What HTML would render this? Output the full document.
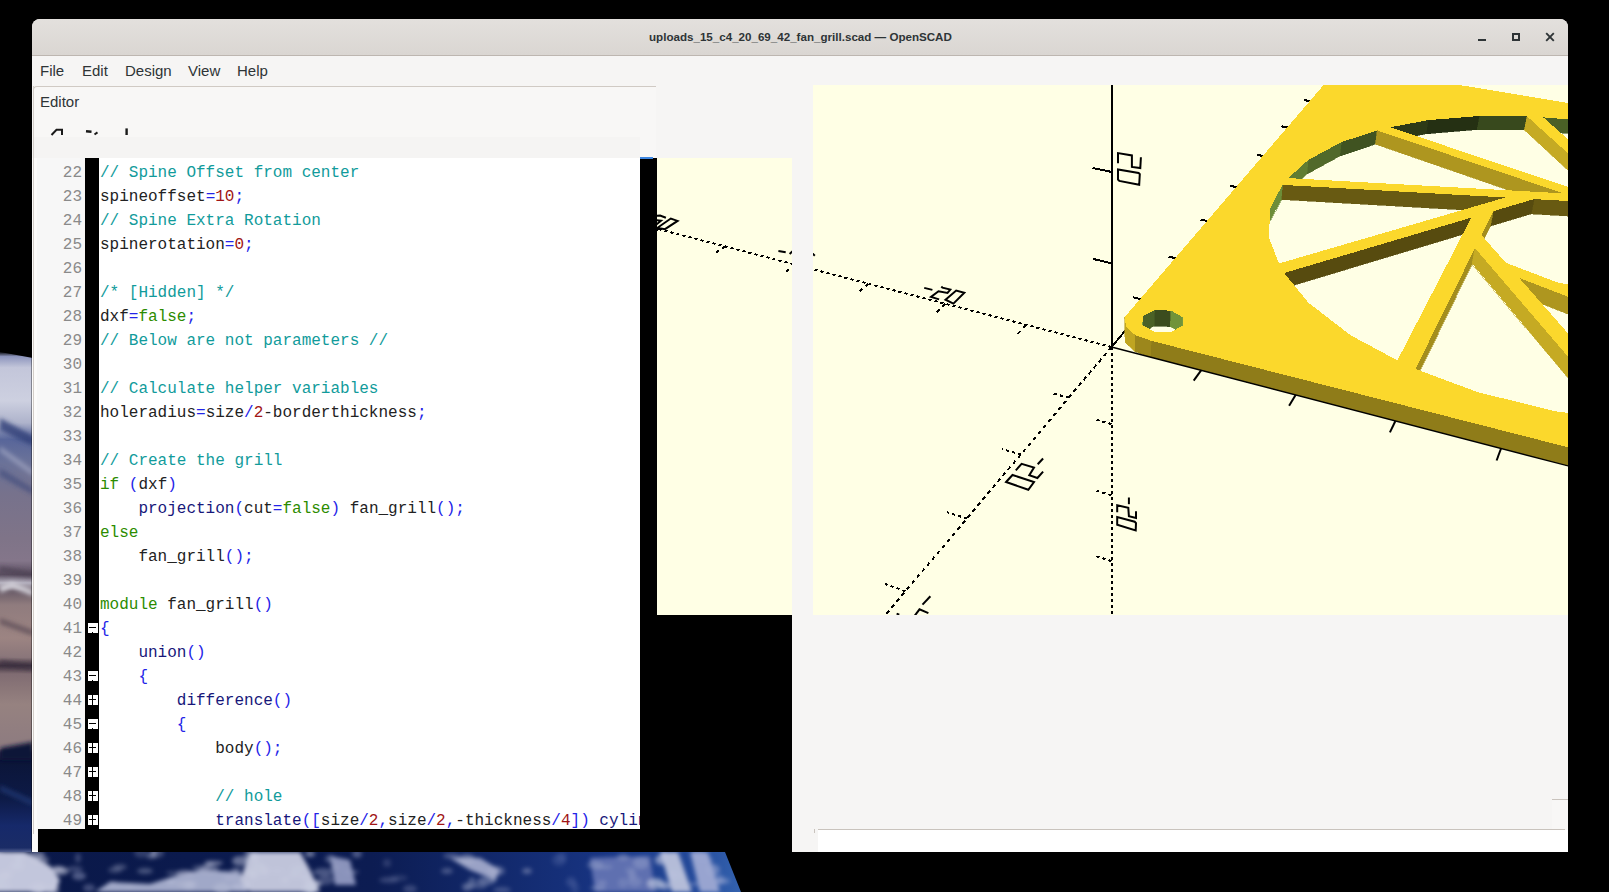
<!DOCTYPE html>
<html><head><meta charset="utf-8">
<style>
*{margin:0;padding:0;box-sizing:border-box}
html,body{width:1609px;height:892px;overflow:hidden;background:#000;position:relative;font-family:"Liberation Sans",sans-serif}
.a{position:absolute}
#win{position:absolute;left:32px;top:19px;width:1536px;height:833px;background:#f6f5f4;border-radius:8px 8px 0 0;overflow:hidden}
#title{position:absolute;left:32px;top:19px;width:1536px;height:37px;background:linear-gradient(#e3e0dd,#dad6d2);border-bottom:1px solid #bdb6b0;border-radius:8px 8px 0 0}
#title .t{position:absolute;left:617px;top:11px;font-weight:bold;font-size:11.6px;color:#2e3436;white-space:nowrap}
#menu{position:absolute;left:32px;top:56px;width:1536px;height:30px;background:#f6f5f4}
.mi{position:absolute;top:63px;font-size:15px;color:#2e3436;line-height:16px}
#dock{position:absolute;left:33px;top:86px;width:623px;height:72px;background:#f8f7f6;border-top:1px solid #d0cac4;border-left:1px solid #d0cac4;border-radius:4px 0 0 0}
#gut{position:absolute;left:37px;top:158px;width:47px;height:671px;background:#f7f7f7}
#blue{position:absolute;left:36px;top:157px;width:1px;height:673px;background:#9cbff0}
#margin{position:absolute;left:85px;top:158px;width:14px;height:671px;background:#000}
#code{position:absolute;left:99px;top:158px;width:541px;height:671px;background:#fff;overflow:hidden}
pre{font-family:"Liberation Mono",monospace;font-size:16px;line-height:24px;color:#222;position:absolute;white-space:pre}
#nums{left:0;top:3px;width:45px;text-align:right;color:#8a8a8a}
#txt{left:1px;top:3px}
.c{color:#119b9b}.o{color:#2424e8}.n{color:#a01515}.k{color:#2c8c00}.m{color:#17177a}
.fb{position:absolute;left:88px;width:10px;height:10px;background:#fff}
.fb i{position:absolute;background:#000}
.fb .h{left:1px;top:4px;width:7px;height:1px}
.fb .v{left:4px;top:0;width:1px;height:10px}
.fb .nt{left:4px;top:9px;width:1px;height:1px}
</style></head><body>
<svg class="a" style="left:0;top:340px" width="33" height="552" viewBox="0 340 33 552">
<defs>
<linearGradient id="eg" x1="0" y1="340" x2="0" y2="892" gradientUnits="userSpaceOnUse">
<stop offset="0" stop-color="#000"/>
<stop offset="0.021" stop-color="#000"/>
<stop offset="0.03" stop-color="#8d95bd"/>
<stop offset="0.05" stop-color="#c3c6da"/>
<stop offset="0.11" stop-color="#cdd0e0"/>
<stop offset="0.15" stop-color="#aeb3cb"/>
<stop offset="0.18" stop-color="#58669a"/>
<stop offset="0.22" stop-color="#6a7299"/>
<stop offset="0.28" stop-color="#77728c"/>
<stop offset="0.36" stop-color="#7f7488"/>
<stop offset="0.40" stop-color="#84768a"/>
<stop offset="0.425" stop-color="#5a4e60"/>
<stop offset="0.44" stop-color="#b5b1bf"/>
<stop offset="0.455" stop-color="#6a5c68"/>
<stop offset="0.48" stop-color="#907c7e"/>
<stop offset="0.54" stop-color="#9c8482"/>
<stop offset="0.575" stop-color="#8a767a"/>
<stop offset="0.59" stop-color="#3e3240"/>
<stop offset="0.605" stop-color="#806c72"/>
<stop offset="0.66" stop-color="#968280"/>
<stop offset="0.74" stop-color="#8d7b80"/>
<stop offset="0.748" stop-color="#2a2a48"/>
<stop offset="0.76" stop-color="#0b1538"/>
<stop offset="0.83" stop-color="#0d1a46"/>
<stop offset="0.88" stop-color="#16296a"/>
<stop offset="0.92" stop-color="#1a2c66"/>
<stop offset="0.935" stop-color="#8e96bc"/>
<stop offset="0.96" stop-color="#c6cadf"/>
<stop offset="1" stop-color="#b0b5d0"/>
</linearGradient>
<filter id="eb" filterUnits="userSpaceOnUse" x="-20" y="330" width="80" height="580"><feGaussianBlur stdDeviation="2"/></filter>
</defs>
<rect x="0" y="340" width="33" height="552" fill="url(#eg)"/>
<g filter="url(#eb)">
<polygon points="0,418 33,436 33,446 0,430" fill="#304078" opacity="0.8"/>
<polygon points="0,446 33,470 33,476 0,452" fill="#a9aec8" opacity="0.6"/>
<polygon points="0,468 33,488 33,495 0,476" fill="#3e4a7c" opacity="0.6"/>
<polygon points="0,586 12,582 33,590 33,596 12,588 0,593" fill="#d8d6de" opacity="0.9"/>
<polygon points="0,566 33,572 33,578 0,572" fill="#4a3e50" opacity="0.6"/>
<polygon points="0,618 33,630 33,636 0,624" fill="#5a4a54" opacity="0.7"/>
<polygon points="0,660 33,665 33,670 0,666" fill="#3a3040" opacity="0.7"/>
<polygon points="0,748 33,742 33,760 0,760" fill="#0b1638"/>
<polygon points="0,785 33,800 33,806 0,791" fill="#2a4080" opacity="0.6"/>
</g>
<polygon points="0,340 33,340 33,358 0,352" fill="#000"/>
</svg>
<svg class="a" style="left:0;top:852px" width="745" height="40" viewBox="0 852 745 40">
<defs>
<clipPath id="ec"><polygon points="0,852 725,852 741,892 0,892"/></clipPath>
<linearGradient id="eg2" x1="0" y1="0" x2="745" y2="0" gradientUnits="userSpaceOnUse">
<stop offset="0" stop-color="#0a1848"/><stop offset="0.5" stop-color="#0c1c52"/><stop offset="0.8" stop-color="#173380"/><stop offset="0.93" stop-color="#23499a"/><stop offset="1" stop-color="#3564b0"/>
</linearGradient>
<filter id="eb2" filterUnits="userSpaceOnUse" x="-20" y="830" width="800" height="80"><feGaussianBlur stdDeviation="2.2"/></filter>
</defs>
<g clip-path="url(#ec)">
<rect x="0" y="852" width="745" height="40" fill="url(#eg2)"/>
<g filter="url(#eb2)">
<polygon points="-10,852 25,852 50,866 60,880 55,892 -10,892" fill="#c2c6dc"/>
<polygon points="95,892 110,882 150,884 175,876 200,870 240,872 248,892" fill="#a0a8c8"/>
<polygon points="250,852 300,852 310,870 320,892 250,892 240,880" fill="#bfc3d9"/>
<polygon points="330,856 350,860 356,885 335,885" fill="#8a93bb"/>
<polygon points="450,858 480,858 500,870 495,880 470,870" fill="#9aa2c6"/>
<polygon points="590,858 650,856 655,892 595,892" fill="#5f70b0"/>
<polygon points="660,852 678,852 692,892 672,892" fill="#b4bcd8"/>
<polygon points="690,852 708,852 720,892 700,892" fill="#98a4d0"/>

<ellipse cx="7" cy="874" rx="6" ry="4" fill="#c9cce0" opacity="0.57"/>
<ellipse cx="-5" cy="853" rx="9" ry="3" fill="#c9cce0" opacity="0.43"/>
<ellipse cx="60" cy="871" rx="9" ry="4" fill="#c9cce0" opacity="0.57"/>
<ellipse cx="1" cy="877" rx="9" ry="4" fill="#c9cce0" opacity="0.61"/>
<ellipse cx="37" cy="855" rx="8" ry="4" fill="#c9cce0" opacity="0.45"/>
<ellipse cx="-8" cy="887" rx="6" ry="5" fill="#c9cce0" opacity="0.66"/>
<ellipse cx="40" cy="889" rx="6" ry="5" fill="#c9cce0" opacity="0.50"/>
<ellipse cx="55" cy="887" rx="4" ry="3" fill="#c9cce0" opacity="0.43"/>
<ellipse cx="58" cy="869" rx="7" ry="3" fill="#c9cce0" opacity="0.52"/>
<ellipse cx="17" cy="866" rx="7" ry="4" fill="#c9cce0" opacity="0.66"/>
<ellipse cx="38" cy="889" rx="9" ry="6" fill="#c9cce0" opacity="0.59"/>
<ellipse cx="1" cy="886" rx="10" ry="6" fill="#c9cce0" opacity="0.55"/>
<ellipse cx="40" cy="860" rx="9" ry="4" fill="#c9cce0" opacity="0.45"/>
<ellipse cx="-6" cy="886" rx="10" ry="2" fill="#c9cce0" opacity="0.63"/>
<ellipse cx="19" cy="858" rx="5" ry="5" fill="#c9cce0" opacity="0.66"/>
<ellipse cx="-7" cy="877" rx="3" ry="5" fill="#c9cce0" opacity="0.47"/>
<ellipse cx="52" cy="891" rx="7" ry="6" fill="#c9cce0" opacity="0.45"/>
<ellipse cx="-5" cy="876" rx="3" ry="3" fill="#c9cce0" opacity="0.49"/>
<ellipse cx="78" cy="858" rx="3" ry="5" fill="#9aa2c8" opacity="0.32"/>
<ellipse cx="89" cy="888" rx="6" ry="4" fill="#9aa2c8" opacity="0.37"/>
<ellipse cx="79" cy="876" rx="7" ry="4" fill="#9aa2c8" opacity="0.48"/>
<ellipse cx="75" cy="869" rx="8" ry="3" fill="#9aa2c8" opacity="0.32"/>
<ellipse cx="173" cy="873" rx="7" ry="2" fill="#a8aecb" opacity="0.32"/>
<ellipse cx="141" cy="853" rx="7" ry="5" fill="#a8aecb" opacity="0.24"/>
<ellipse cx="145" cy="871" rx="8" ry="3" fill="#a8aecb" opacity="0.39"/>
<ellipse cx="154" cy="853" rx="3" ry="5" fill="#a8aecb" opacity="0.45"/>
<ellipse cx="115" cy="870" rx="7" ry="3" fill="#a8aecb" opacity="0.31"/>
<ellipse cx="120" cy="867" rx="7" ry="3" fill="#a8aecb" opacity="0.32"/>
<ellipse cx="157" cy="853" rx="7" ry="5" fill="#a8aecb" opacity="0.30"/>
<ellipse cx="113" cy="884" rx="5" ry="3" fill="#a8aecb" opacity="0.33"/>
<ellipse cx="151" cy="856" rx="5" ry="3" fill="#a8aecb" opacity="0.42"/>
<ellipse cx="130" cy="886" rx="4" ry="3" fill="#a8aecb" opacity="0.38"/>
<ellipse cx="236" cy="870" rx="5" ry="2" fill="#b8bdd6" opacity="0.48"/>
<ellipse cx="184" cy="884" rx="9" ry="3" fill="#b8bdd6" opacity="0.41"/>
<ellipse cx="231" cy="878" rx="9" ry="3" fill="#b8bdd6" opacity="0.36"/>
<ellipse cx="192" cy="884" rx="5" ry="3" fill="#b8bdd6" opacity="0.45"/>
<ellipse cx="201" cy="868" rx="9" ry="3" fill="#b8bdd6" opacity="0.32"/>
<ellipse cx="241" cy="887" rx="10" ry="4" fill="#b8bdd6" opacity="0.62"/>
<ellipse cx="240" cy="861" rx="8" ry="5" fill="#b8bdd6" opacity="0.52"/>
<ellipse cx="209" cy="864" rx="5" ry="3" fill="#b8bdd6" opacity="0.34"/>
<ellipse cx="214" cy="863" rx="9" ry="2" fill="#b8bdd6" opacity="0.60"/>
<ellipse cx="222" cy="889" rx="9" ry="6" fill="#b8bdd6" opacity="0.50"/>
<ellipse cx="171" cy="882" rx="4" ry="3" fill="#b8bdd6" opacity="0.52"/>
<ellipse cx="209" cy="869" rx="10" ry="4" fill="#b8bdd6" opacity="0.42"/>
<ellipse cx="189" cy="886" rx="6" ry="5" fill="#b8bdd6" opacity="0.43"/>
<ellipse cx="185" cy="873" rx="9" ry="3" fill="#b8bdd6" opacity="0.57"/>
<ellipse cx="314" cy="884" rx="9" ry="2" fill="#c8cce0" opacity="0.57"/>
<ellipse cx="310" cy="854" rx="5" ry="3" fill="#c8cce0" opacity="0.53"/>
<ellipse cx="277" cy="871" rx="8" ry="2" fill="#c8cce0" opacity="0.37"/>
<ellipse cx="255" cy="857" rx="3" ry="6" fill="#c8cce0" opacity="0.65"/>
<ellipse cx="251" cy="872" rx="5" ry="3" fill="#c8cce0" opacity="0.48"/>
<ellipse cx="294" cy="875" rx="6" ry="3" fill="#c8cce0" opacity="0.46"/>
<ellipse cx="254" cy="874" rx="8" ry="4" fill="#c8cce0" opacity="0.38"/>
<ellipse cx="258" cy="867" rx="7" ry="5" fill="#c8cce0" opacity="0.48"/>
<ellipse cx="305" cy="877" rx="6" ry="3" fill="#c8cce0" opacity="0.52"/>
<ellipse cx="298" cy="869" rx="8" ry="4" fill="#c8cce0" opacity="0.43"/>
<ellipse cx="285" cy="880" rx="4" ry="4" fill="#c8cce0" opacity="0.50"/>
<ellipse cx="311" cy="889" rx="6" ry="6" fill="#c8cce0" opacity="0.63"/>
<ellipse cx="265" cy="871" rx="4" ry="5" fill="#c8cce0" opacity="0.58"/>
<ellipse cx="312" cy="884" rx="8" ry="5" fill="#c8cce0" opacity="0.55"/>
<ellipse cx="253" cy="876" rx="3" ry="3" fill="#c8cce0" opacity="0.62"/>
<ellipse cx="248" cy="856" rx="4" ry="6" fill="#c8cce0" opacity="0.41"/>
<ellipse cx="247" cy="886" rx="4" ry="5" fill="#c8cce0" opacity="0.59"/>
<ellipse cx="308" cy="890" rx="7" ry="5" fill="#c8cce0" opacity="0.36"/>
<ellipse cx="351" cy="872" rx="8" ry="2" fill="#9aa2c6" opacity="0.43"/>
<ellipse cx="357" cy="854" rx="5" ry="4" fill="#9aa2c6" opacity="0.45"/>
<ellipse cx="330" cy="859" rx="5" ry="4" fill="#9aa2c6" opacity="0.43"/>
<ellipse cx="336" cy="867" rx="6" ry="3" fill="#9aa2c6" opacity="0.35"/>
<ellipse cx="323" cy="872" rx="10" ry="4" fill="#9aa2c6" opacity="0.43"/>
<ellipse cx="326" cy="880" rx="8" ry="5" fill="#9aa2c6" opacity="0.37"/>
<ellipse cx="399" cy="878" rx="9" ry="3" fill="#8d95bb" opacity="0.21"/>
<ellipse cx="410" cy="889" rx="7" ry="4" fill="#8d95bb" opacity="0.33"/>
<ellipse cx="387" cy="863" rx="4" ry="4" fill="#8d95bb" opacity="0.25"/>
<ellipse cx="389" cy="880" rx="10" ry="3" fill="#8d95bb" opacity="0.33"/>
<ellipse cx="480" cy="886" rx="7" ry="3" fill="#b0b6d2" opacity="0.30"/>
<ellipse cx="447" cy="871" rx="6" ry="3" fill="#b0b6d2" opacity="0.34"/>
<ellipse cx="472" cy="883" rx="4" ry="6" fill="#b0b6d2" opacity="0.36"/>
<ellipse cx="496" cy="871" rx="9" ry="5" fill="#b0b6d2" opacity="0.38"/>
<ellipse cx="486" cy="881" rx="9" ry="4" fill="#b0b6d2" opacity="0.43"/>
<ellipse cx="527" cy="871" rx="5" ry="3" fill="#b0b6d2" opacity="0.42"/>
<ellipse cx="502" cy="890" rx="9" ry="3" fill="#b0b6d2" opacity="0.29"/>
<ellipse cx="467" cy="859" rx="8" ry="5" fill="#b0b6d2" opacity="0.46"/>
<ellipse cx="467" cy="887" rx="5" ry="4" fill="#b0b6d2" opacity="0.43"/>
<ellipse cx="452" cy="856" rx="9" ry="3" fill="#b0b6d2" opacity="0.33"/>
<ellipse cx="494" cy="879" rx="3" ry="3" fill="#b0b6d2" opacity="0.35"/>
<ellipse cx="559" cy="860" rx="7" ry="6" fill="#7080b8" opacity="0.24"/>
<ellipse cx="562" cy="857" rx="5" ry="5" fill="#7080b8" opacity="0.20"/>
<ellipse cx="575" cy="888" rx="4" ry="6" fill="#7080b8" opacity="0.24"/>
<ellipse cx="571" cy="882" rx="5" ry="5" fill="#7080b8" opacity="0.29"/>
<ellipse cx="641" cy="863" rx="8" ry="6" fill="#98a4cc" opacity="0.44"/>
<ellipse cx="623" cy="857" rx="6" ry="3" fill="#98a4cc" opacity="0.45"/>
<ellipse cx="632" cy="875" rx="4" ry="5" fill="#98a4cc" opacity="0.43"/>
<ellipse cx="598" cy="888" rx="8" ry="2" fill="#98a4cc" opacity="0.50"/>
<ellipse cx="595" cy="865" rx="8" ry="4" fill="#98a4cc" opacity="0.41"/>
<ellipse cx="630" cy="870" rx="5" ry="3" fill="#98a4cc" opacity="0.28"/>
<ellipse cx="635" cy="882" rx="7" ry="5" fill="#98a4cc" opacity="0.36"/>
<ellipse cx="604" cy="867" rx="9" ry="2" fill="#98a4cc" opacity="0.39"/>
<ellipse cx="602" cy="883" rx="5" ry="3" fill="#98a4cc" opacity="0.37"/>
<ellipse cx="623" cy="883" rx="5" ry="5" fill="#98a4cc" opacity="0.29"/>
<ellipse cx="664" cy="856" rx="4" ry="5" fill="#b8c0dc" opacity="0.60"/>
<ellipse cx="661" cy="860" rx="6" ry="5" fill="#b8c0dc" opacity="0.64"/>
<ellipse cx="681" cy="876" rx="4" ry="4" fill="#b8c0dc" opacity="0.42"/>
<ellipse cx="673" cy="875" rx="4" ry="3" fill="#b8c0dc" opacity="0.62"/>
<ellipse cx="656" cy="884" rx="9" ry="6" fill="#b8c0dc" opacity="0.48"/>
<ellipse cx="674" cy="875" rx="7" ry="6" fill="#b8c0dc" opacity="0.59"/>
<ellipse cx="665" cy="886" rx="6" ry="4" fill="#b8c0dc" opacity="0.60"/>
<ellipse cx="655" cy="883" rx="8" ry="4" fill="#b8c0dc" opacity="0.53"/>
<ellipse cx="706" cy="860" rx="7" ry="2" fill="#9eaad4" opacity="0.42"/>
<ellipse cx="713" cy="870" rx="7" ry="6" fill="#9eaad4" opacity="0.53"/>
<ellipse cx="695" cy="884" rx="7" ry="2" fill="#9eaad4" opacity="0.38"/>
<ellipse cx="698" cy="855" rx="7" ry="6" fill="#9eaad4" opacity="0.37"/>
<ellipse cx="720" cy="880" rx="4" ry="5" fill="#9eaad4" opacity="0.45"/>
<ellipse cx="722" cy="881" rx="8" ry="3" fill="#9eaad4" opacity="0.50"/>
</g>
</g>
</svg>

<div id="win"></div>
<div id="title"><div class="t">uploads_15_c4_20_69_42_fan_grill.scad — OpenSCAD</div></div>
<div id="menu"></div>
<div class="mi" style="left:40px">File</div><div class="mi" style="left:82px">Edit</div><div class="mi" style="left:125px">Design</div><div class="mi" style="left:188px">View</div><div class="mi" style="left:237px">Help</div>
<div id="dock"></div>
<div class="mi" style="left:40px;top:94px">Editor</div>
<div id="blue"></div>
<div class="a" style="left:31px;top:340px;width:1px;height:512px;background:rgba(0,0,0,0.35)"></div>
<div class="a" style="left:32px;top:158px;width:5px;height:694px;background:#fcfbfa"></div>
<div class="a" style="left:33px;top:86px;width:1px;height:748px;background:#d3cec9"></div>
<div id="gut"><pre id="nums">22
23
24
25
26
27
28
29
30
31
32
33
34
35
36
37
38
39
40
41
42
43
44
45
46
47
48
49</pre></div>
<div id="margin"></div>
<div class="fb" style="top:623px"><i class="h"></i><i class="nt"></i></div><div class="fb" style="top:671px"><i class="h"></i><i class="nt"></i></div><div class="fb" style="top:695px"><i class="h"></i><i class="v"></i></div><div class="fb" style="top:719px"><i class="h"></i><i class="nt"></i></div><div class="fb" style="top:743px"><i class="h"></i><i class="v"></i></div><div class="fb" style="top:767px"><i class="h"></i><i class="v"></i></div><div class="fb" style="top:791px"><i class="h"></i><i class="v"></i></div><div class="fb" style="top:815px"><i class="h"></i><i class="v"></i></div>
<div id="code"><pre id="txt"><span class="c">// Spine Offset from center</span>
spineoffset<span class="o">=</span><span class="n">10</span><span class="o">;</span>
<span class="c">// Spine Extra Rotation</span>
spinerotation<span class="o">=</span><span class="n">0</span><span class="o">;</span>

<span class="c">/* [Hidden] */</span>
dxf<span class="o">=</span><span class="k">false</span><span class="o">;</span>
<span class="c">// Below are not parameters //</span>

<span class="c">// Calculate helper variables</span>
holeradius<span class="o">=</span>size<span class="o">/</span><span class="n">2</span>-borderthickness<span class="o">;</span>

<span class="c">// Create the grill</span>
<span class="k">if</span> <span class="o">(</span>dxf<span class="o">)</span>
    <span class="m">projection</span><span class="o">(</span>cut<span class="o">=</span><span class="k">false</span><span class="o">)</span> fan_grill<span class="o">();</span>
<span class="k">else</span>
    fan_grill<span class="o">();</span>

<span class="k">module</span> fan_grill<span class="o">()</span>
<span class="o">{</span>
    <span class="m">union</span><span class="o">()</span>
    <span class="o">{</span>
        <span class="m">difference</span><span class="o">()</span>
        <span class="o">{</span>
            body<span class="o">();</span>

            <span class="c">// hole</span>
            <span class="m">translate</span><span class="o">([</span>size<span class="o">/</span><span class="n">2</span><span class="o">,</span>size<span class="o">/</span><span class="n">2</span><span class="o">,</span>-thickness<span class="o">/</span><span class="n">4</span><span class="o">])</span> <span class="m">cylinder(d=holesize,h=thickness);</span></pre></div>
<div class="a" style="left:640px;top:158px;width:17px;height:694px;background:#000"></div>
<div class="a" style="left:38px;top:829px;width:754px;height:23px;background:#000"></div>

<svg class="a" style="left:0;top:0" width="1609" height="892" viewBox="0 0 1609 892">
<defs><clipPath id="vp"><rect x="813" y="85" width="755" height="530"/><rect x="657" y="158" width="135" height="457"/></clipPath></defs>
<g clip-path="url(#vp)">
<rect x="600" y="80" width="1000" height="540" fill="#ffffe5"/>
<g stroke="#000" stroke-width="2" fill="none" shape-rendering="crispEdges"><line x1="1111.5" y1="347.0" x2="1111.5" y2="71.9" />
<line x1="1111.5" y1="347.0" x2="1111.5" y2="651.3" stroke-dasharray="3.00 3.00"/>
<line x1="1111.5" y1="347.0" x2="1357.5" y2="55.3" />
<line x1="1111.5" y1="347.0" x2="753.9" y2="771.0" stroke-dasharray="3.92 3.92"/>
<line x1="1111.5" y1="347.0" x2="532.9" y2="196.4" stroke-dasharray="3.10 3.10"/>
<line x1="1026.4" y1="324.9" x2="1017.5" y2="334.1" stroke-dasharray="4.16 4.16"/>
<line x1="1149.9" y1="301.5" x2="1133.2" y2="297.4" />
<line x1="1068.7" y1="397.8" x2="1050.6" y2="392.7" stroke-dasharray="3.11 3.11"/>
<line x1="1111.5" y1="263.3" x2="1093.3" y2="259.0" />
<line x1="1111.5" y1="424.1" x2="1094.8" y2="419.4" stroke-dasharray="3.12 3.12"/>
<line x1="945.5" y1="303.8" x2="936.0" y2="312.6" stroke-dasharray="4.09 4.09"/>
<line x1="1184.6" y1="260.3" x2="1168.6" y2="256.6" />
<line x1="1020.8" y1="454.5" x2="1001.9" y2="448.9" stroke-dasharray="3.13 3.13"/>
<line x1="1111.5" y1="171.9" x2="1092.5" y2="168.0" />
<line x1="1111.5" y1="495.2" x2="1095.4" y2="490.4" stroke-dasharray="3.14 3.14"/>
<line x1="868.4" y1="283.8" x2="858.4" y2="292.1" stroke-dasharray="3.91 3.91"/>
<line x1="1216.1" y1="222.9" x2="1200.7" y2="219.6" />
<line x1="966.8" y1="518.6" x2="947.0" y2="512.1" stroke-dasharray="3.15 3.15"/>
<line x1="1111.5" y1="71.9" x2="1091.6" y2="68.3" />
<line x1="1111.5" y1="561.1" x2="1096.0" y2="556.1" stroke-dasharray="3.15 3.15"/>
<line x1="795.0" y1="264.7" x2="784.5" y2="272.6" stroke-dasharray="3.77 3.77"/>
<line x1="1244.9" y1="188.8" x2="1230.0" y2="185.8" />
<line x1="905.5" y1="591.3" x2="884.8" y2="583.9" stroke-dasharray="3.18 3.18"/>
<line x1="1111.5" y1="622.3" x2="1096.6" y2="617.2" stroke-dasharray="3.17 3.17"/>
<line x1="725.0" y1="246.4" x2="714.1" y2="254.0" stroke-dasharray="3.66 3.66"/>
<line x1="1271.2" y1="157.6" x2="1256.8" y2="154.8" />
<line x1="835.3" y1="674.6" x2="813.5" y2="666.1" stroke-dasharray="3.22 3.22"/>
<line x1="658.1" y1="229.0" x2="646.8" y2="236.3" stroke-dasharray="3.57 3.57"/>
<line x1="1295.4" y1="128.9" x2="1281.5" y2="126.3" />
<line x1="753.9" y1="771.0" x2="731.1" y2="761.1" stroke-dasharray="3.27 3.27"/>
<line x1="594.1" y1="212.3" x2="582.5" y2="219.3" stroke-dasharray="3.50 3.50"/>
<line x1="1317.7" y1="102.5" x2="1304.3" y2="100.1" />
<line x1="658.8" y1="883.9" x2="634.8" y2="872.3" stroke-dasharray="3.33 3.33"/>
<line x1="532.9" y1="196.4" x2="521.0" y2="203.1" stroke-dasharray="3.44 3.44"/>
<line x1="1338.4" y1="78.0" x2="1325.4" y2="75.8" />
<line x1="545.8" y1="1017.8" x2="520.7" y2="1003.9" stroke-dasharray="3.43 3.43"/>
<line x1="474.2" y1="181.1" x2="462.0" y2="187.5" stroke-dasharray="3.39 3.39"/>
<line x1="1357.5" y1="55.3" x2="1344.9" y2="53.2" />
<line x1="409.6" y1="1179.3" x2="383.2" y2="1162.4" stroke-dasharray="3.56 3.56"/></g>
<g shape-rendering="crispEdges"><polygon points="1349.5,86.4 1361.3,86.6 1362.9,73.6 1350.9,73.4" fill="#3b4c1e" stroke="#3b4c1e" stroke-width="0.6"/>
<polygon points="1341.9,89.5 1349.5,86.4 1350.9,73.4 1343.4,76.5" fill="#4b6127" stroke="#4b6127" stroke-width="0.6"/>
<polygon points="1361.3,86.6 1370.7,90.1 1372.3,77.0 1362.9,73.6" fill="#71933a" stroke="#71933a" stroke-width="0.6"/>
<polygon points="1370.7,90.1 1372.1,94.7 1373.8,81.6 1372.3,77.0" fill="#789b3e" stroke="#789b3e" stroke-width="0.6"/>
<polygon points="1476.6,129.6 1524.4,130.0 1527.1,116.4 1479.1,116.0" fill="#38491d" stroke="#38491d" stroke-width="0.6"/>
<polygon points="1426.0,133.9 1476.6,129.6 1479.1,116.0 1428.1,120.2" fill="#253013" stroke="#253013" stroke-width="0.6"/>
<polygon points="1540.4,131.0 1586.5,135.2 1589.6,121.5 1543.2,117.3" fill="#4a6026" stroke="#4a6026" stroke-width="0.6"/>
<polygon points="1388.2,141.1 1426.0,133.9 1428.1,120.2 1390.1,127.3" fill="#2d3a17" stroke="#2d3a17" stroke-width="0.6"/>
<polygon points="1586.5,135.2 1643.1,145.0 1646.7,131.2 1589.6,121.5" fill="#5a752f" stroke="#5a752f" stroke-width="0.6"/>
<polygon points="1339.7,156.2 1375.4,144.2 1377.2,130.4 1341.3,142.2" fill="#405321" stroke="#405321" stroke-width="0.6"/>
<polygon points="1643.1,145.0 1692.6,157.8 1696.5,143.7 1646.7,131.2" fill="#688736" stroke="#688736" stroke-width="0.6"/>
<polygon points="1306.8,174.2 1339.7,156.2 1341.3,142.2 1308.2,160.0" fill="#51692a" stroke="#51692a" stroke-width="0.6"/>
<polygon points="1708.4,162.8 1752.7,178.4 1757.2,164.1 1712.4,148.6" fill="#72943b" stroke="#72943b" stroke-width="0.6"/>
<polygon points="1524.4,130.0 1623.1,221.4 1626.9,206.5 1527.1,116.4" fill="#c5aa23" stroke="#c5aa23" stroke-width="0.6"/>
<polygon points="1375.4,144.2 1560.3,208.1 1563.6,193.4 1377.2,130.4" fill="#ae961f" stroke="#ae961f" stroke-width="0.6"/>
<polygon points="1287.1,192.5 1306.8,174.2 1308.2,160.0 1288.4,178.1" fill="#607d32" stroke="#607d32" stroke-width="0.6"/>
<polygon points="1900.2,180.6 1914.2,180.9 1919.8,166.5 1905.7,166.2" fill="#3b4c1e" stroke="#3b4c1e" stroke-width="0.6"/>
<polygon points="1894.6,184.7 1900.2,180.6 1905.7,166.2 1900.1,170.3" fill="#4b6127" stroke="#4b6127" stroke-width="0.6"/>
<polygon points="1914.2,180.9 1928.5,185.4 1934.2,171.0 1919.8,166.5" fill="#71933a" stroke="#71933a" stroke-width="0.6"/>
<polygon points="1928.5,185.4 1934.8,191.6 1940.7,177.1 1934.2,171.0" fill="#789b3e" stroke="#789b3e" stroke-width="0.6"/>
<polygon points="1752.7,178.4 1802.2,201.7 1807.2,187.0 1757.2,164.1" fill="#799d3f" stroke="#799d3f" stroke-width="0.6"/>
<polygon points="1692.6,157.8 1670.0,248.5 1674.2,233.3 1696.5,143.7" fill="#a38d1d" stroke="#a38d1d" stroke-width="0.6"/>
<polygon points="1281.2,199.5 1502.4,212.2 1505.3,197.5 1282.5,184.9" fill="#685a12" stroke="#685a12" stroke-width="0.6"/>
<polygon points="1269.1,222.9 1281.2,199.5 1282.5,184.9 1270.3,208.1" fill="#6d8d38" stroke="#6d8d38" stroke-width="0.6"/>
<polygon points="1802.2,201.7 1840.3,225.7 1845.8,210.7 1807.2,187.0" fill="#7ca040" stroke="#7ca040" stroke-width="0.6"/>
<polygon points="1531.1,213.9 1586.2,217.1 1589.7,202.3 1534.2,199.1" fill="#685a12" stroke="#685a12" stroke-width="0.6"/>
<polygon points="1490.4,226.1 1531.1,213.9 1534.2,199.1 1493.2,211.2" fill="#574b0f" stroke="#574b0f" stroke-width="0.6"/>
<polygon points="1586.2,217.1 1637.6,234.8 1641.6,219.8 1589.7,202.3" fill="#ae961f" stroke="#ae961f" stroke-width="0.6"/>
<polygon points="1478.6,250.3 1490.4,226.1 1493.2,211.2 1481.5,235.1" fill="#a38d1d" stroke="#a38d1d" stroke-width="0.6"/>
<polygon points="1851.4,234.1 1880.0,259.3 1885.9,244.0 1856.9,219.1" fill="#7b9f3f" stroke="#7b9f3f" stroke-width="0.6"/>
<polygon points="1637.6,234.8 1666.7,261.7 1671.0,246.4 1641.6,219.8" fill="#c5aa23" stroke="#c5aa23" stroke-width="0.6"/>
<polygon points="1282.7,288.6 1468.5,232.7 1471.2,217.7 1284.2,273.0" fill="#574b0f" stroke="#574b0f" stroke-width="0.6"/>
<polygon points="1649.9,305.0 1851.4,234.1 1856.9,219.1 1654.4,289.2" fill="#574b0f" stroke="#574b0f" stroke-width="0.6"/>
<polygon points="1666.7,261.7 1660.1,288.2 1664.5,272.6 1671.0,246.4" fill="#a38d1d" stroke="#a38d1d" stroke-width="0.6"/>
<polygon points="1880.0,259.3 1903.2,292.1 1909.6,276.4 1885.9,244.0" fill="#76983d" stroke="#76983d" stroke-width="0.6"/>
<polygon points="1903.2,292.1 1911.5,321.9 1918.1,305.9 1909.6,276.4" fill="#6d8d38" stroke="#6d8d38" stroke-width="0.6"/>
<polygon points="1412.7,385.5 1472.1,263.5 1475.0,248.2 1415.5,368.9" fill="#a38d1d" stroke="#a38d1d" stroke-width="0.6"/>
<polygon points="1585.1,310.3 1911.4,331.6 1918.2,315.5 1589.1,294.4" fill="#685a12" stroke="#685a12" stroke-width="0.6"/>
<polygon points="1154.1,326.2 1170.3,326.6 1170.9,310.6 1154.6,310.2" fill="#3b4c1e" stroke="#3b4c1e" stroke-width="0.6"/>
<polygon points="1142.4,332.1 1154.1,326.2 1154.6,310.2 1142.8,316.0" fill="#4b6127" stroke="#4b6127" stroke-width="0.6"/>
<polygon points="1170.3,326.6 1181.8,333.1 1182.5,317.1 1170.9,310.6" fill="#71933a" stroke="#71933a" stroke-width="0.6"/>
<polygon points="1142.0,341.0 1142.4,332.1 1142.8,316.0 1142.4,324.9" fill="#789b3e" stroke="#789b3e" stroke-width="0.6"/>
<polygon points="1181.8,333.1 1181.9,342.1 1182.6,325.9 1182.5,317.1" fill="#789b3e" stroke="#789b3e" stroke-width="0.6"/>
<polygon points="1124.6,332.9 1125.6,342.9 1125.9,326.7 1124.8,316.9" fill="#c2a722" stroke="#c2a722" stroke-width="0.6"/>
<polygon points="1472.1,263.5 1617.6,437.2 1622.5,420.1 1475.0,248.2" fill="#c5aa23" stroke="#c5aa23" stroke-width="0.6"/>
<polygon points="1125.6,342.9 1135.2,351.7 1135.5,335.4 1125.9,326.7" fill="#bfa522" stroke="#bfa522" stroke-width="0.6"/>
<polygon points="1911.4,331.6 1905.9,358.9 1912.8,342.5 1918.2,315.5" fill="#607d32" stroke="#607d32" stroke-width="0.6"/>
<polygon points="1516.0,293.7 1829.7,417.0 1836.3,400.1 1519.3,278.0" fill="#ae961f" stroke="#ae961f" stroke-width="0.6"/>
<polygon points="1135.2,351.7 1151.2,357.2 1151.6,340.9 1135.5,335.4" fill="#9c871c" stroke="#9c871c" stroke-width="0.6"/>
<polygon points="1151.2,357.2 1944.1,563.6 1952.9,545.6 1151.6,340.9" fill="#8f7c19" stroke="#8f7c19" stroke-width="0.6"/>
<polygon points="1914.5,517.0 1934.8,517.7 1943.2,500.0 1922.7,499.3" fill="#3b4c1e" stroke="#3b4c1e" stroke-width="0.6"/>
<polygon points="1906.3,525.8 1914.5,517.0 1922.7,499.3 1914.5,508.1" fill="#4b6127" stroke="#4b6127" stroke-width="0.6"/>
<polygon points="1934.8,517.7 1956.0,527.4 1964.7,509.7 1943.2,500.0" fill="#71933a" stroke="#71933a" stroke-width="0.6"/>
<polygon points="1956.0,527.4 1965.6,540.8 1974.6,523.0 1964.7,509.7" fill="#789b3e" stroke="#789b3e" stroke-width="0.6"/>
<polygon points="1968.1,564.9 1984.4,558.7 1993.6,540.8 1977.2,546.9" fill="#493f0d" stroke="#493f0d" stroke-width="0.6"/>
<polygon points="1944.1,563.6 1968.1,564.9 1977.2,546.9 1952.9,545.6" fill="#615411" stroke="#615411" stroke-width="0.6"/>
<path d="M1124.8,316.9 L1125.9,326.7 L1135.5,335.4 L1151.6,340.9 L1952.9,545.6 L1977.2,546.9 L1993.6,540.8 L1998.4,528.9 L1956.6,179.8 L1951.8,173.1 L1939.8,166.6 L1923.7,161.8 L1369.4,70.1 L1356.3,68.5 L1343.7,69.3 L1334.4,72.4 L1330.5,76.9 L1124.8,316.9Z M1974.6,523.0 L1966.7,532.1 L1945.5,531.4 L1923.8,521.3 L1914.5,508.1 L1922.7,499.3 L1943.2,500.0 L1964.7,509.7 L1974.6,523.0Z M1940.7,177.1 L1935.1,181.3 L1920.8,181.0 L1906.2,176.4 L1900.1,170.3 L1905.7,166.2 L1919.8,166.5 L1934.2,171.0 L1940.7,177.1Z M1856.9,219.1 L1885.9,244.0 L1909.6,276.4 L1918.1,305.9 L1654.4,289.2 L1856.9,219.1Z M1888.6,372.3 L1851.4,394.2 L1589.1,294.4 L1918.2,315.5 L1912.8,342.5 L1888.6,372.3Z M1807.2,187.0 L1845.8,210.7 L1686.4,265.1 L1712.4,148.6 L1757.2,164.1 L1807.2,187.0Z M1716.6,423.2 L1646.1,422.2 L1519.3,278.0 L1836.3,400.1 L1788.1,414.6 L1716.6,423.2Z M1646.7,131.2 L1696.5,143.7 L1674.2,233.3 L1543.2,117.3 L1589.6,121.5 L1646.7,131.2Z M1505.8,262.8 L1481.5,235.1 L1493.2,211.2 L1534.2,199.1 L1589.7,202.3 L1641.6,219.8 L1671.0,246.4 L1664.5,272.6 L1621.7,287.2 L1559.7,283.3 L1505.8,262.8Z M1477.2,392.0 L1415.5,368.9 L1475.0,248.2 L1622.5,420.1 L1555.3,411.3 L1477.2,392.0Z M1479.1,116.0 L1527.1,116.4 L1626.9,206.5 L1390.1,127.3 L1428.1,120.2 L1479.1,116.0Z M1341.3,142.2 L1377.2,130.4 L1563.6,193.4 L1288.4,178.1 L1308.2,160.0 L1341.3,142.2Z M1270.3,208.1 L1282.5,184.9 L1505.3,197.5 L1278.9,263.5 L1268.9,237.4 L1270.3,208.1Z M1308.3,302.6 L1284.2,273.0 L1471.2,217.7 L1397.4,360.4 L1350.8,335.4 L1308.3,302.6Z M1182.6,325.9 L1170.7,332.0 L1154.0,331.5 L1142.4,324.9 L1142.8,316.0 L1154.6,310.2 L1170.9,310.6 L1182.5,317.1 L1182.6,325.9Z M1373.8,81.6 L1366.2,84.8 L1354.0,84.5 L1344.6,81.1 L1343.4,76.5 L1350.9,73.4 L1362.9,73.6 L1372.3,77.0 L1373.8,81.6Z " fill="#fbd82c" fill-rule="evenodd"/></g>
<g stroke="#000" stroke-width="2" fill="none"><line x1="1111.5" y1="347.0" x2="2136.0" y2="613.8"  stroke-width="1.4"/>
<line x1="1201.1" y1="370.4" x2="1193.7" y2="380.6" />
<line x1="1295.6" y1="395.0" x2="1289.1" y2="405.8" />
<line x1="1395.4" y1="421.0" x2="1389.9" y2="432.4" />
<line x1="1501.0" y1="448.5" x2="1496.6" y2="460.5" />
<line x1="1612.9" y1="477.6" x2="1609.7" y2="490.4" />
<line x1="1731.6" y1="508.5" x2="1729.9" y2="522.1" />
<line x1="1857.9" y1="541.4" x2="1857.7" y2="555.8" />
<line x1="1992.4" y1="576.4" x2="1994.1" y2="591.8" />
<line x1="2136.0" y1="613.8" x2="2139.7" y2="630.2" />
<polyline points="1118.0,163.2 1118.0,153.1 1131.9,155.4 1131.9,166.9 1140.3,168.0 1140.9,157.3"/>
<polygon points="1118.0,169.4 1118.0,179.5 1119.3,180.9 1139.2,184.8 1139.8,174.1 1138.6,173.0"/>
<polyline points="924.2,287.9 932.4,289.9"/>
<polyline points="941.3,286.5 942.5,287.7 950.3,289.6 947.5,293.0 938.5,291.3 931.0,296.9 939.1,299.4"/>
<polygon points="945.5,299.7 956.2,290.5 964.3,292.7 953.4,303.6"/>
<polyline points="1037.7,464.2 1043.1,458.5"/>
<polyline points="1015.8,470.3 1021.6,463.9 1034.0,467.6 1029.3,475.3 1037.4,478.0 1043.1,471.6"/>
<polygon points="1006.1,482.0 1012.5,475.0 1034.0,482.0 1028.3,489.8"/>
<polyline points="1128.9,497.5 1128.9,504.2"/>
<polyline points="1117.2,512.3 1117.2,505.2 1128.3,507.9 1128.9,516.3 1136.0,518.0 1136.0,511.3"/>
<polygon points="1117.2,517.0 1117.2,524.8 1135.7,530.5 1136.0,523.1 1134.7,521.7"/>
<polyline points="922.5,604.6 930.4,596.2"/>
<polyline points="914.5,616.0 919.5,609.3 928.4,613.1"/>
<polyline points="896.6,613.6 899.3,614.6"/>
<polyline points="650.0,233.0 670.8,218.5 677.6,220.9 665.0,229.2 657.8,227.9"/>
<polyline points="652.0,216.0 660.1,215.5 665.9,217.8"/>
<polyline points="652.0,219.5 661.0,220.7 654.0,226.5"/>
<polyline points="778.4,251.1 785.7,252.2"/>
<polyline points="789.6,253.9 795.0,249.0"/>
<polyline points="795.0,254.0 813.0,253.9 814.8,255.7"/></g>
</g></svg>

<div class="a" style="left:640px;top:615px;width:152px;height:237px;background:#000"></div>
<div class="a" style="left:818px;top:829px;width:747px;height:1px;background:#c9c3bd"></div>
<div class="a" style="left:818px;top:830px;width:750px;height:22px;background:#fff"></div>
<div class="a" style="left:814px;top:829px;width:1px;height:4px;background:#c9c3bd"></div>
<div class="a" style="left:1552px;top:799px;width:16px;height:1px;background:#c9c3bd"></div>
<div class="a" style="left:1552px;top:800px;width:16px;height:29px;background:#f8f7f6"></div>
<div class="a" style="left:1478px;top:39px;width:8px;height:2.4px;background:#2e3436"></div>
<div class="a" style="left:1512px;top:33px;width:8px;height:8px;border:2px solid #2e3436"></div>
<svg class="a" style="left:1545px;top:32px" width="10" height="10" viewBox="0 0 10 10"><path d="M1.2 1.2L8.8 8.8M8.8 1.2L1.2 8.8" stroke="#2e3436" stroke-width="1.9"/></svg>
<div class="a" style="left:34px;top:137px;width:606px;height:21px;background:#f5f4f3"></div>
<div class="a" style="left:640px;top:157px;width:13px;height:2px;background:#3d86e0"></div>
<svg class="a" style="left:44px;top:120px" width="100" height="16" viewBox="44 120 100 16"><g stroke="#1a1a1a" stroke-width="2" fill="none"><path d="M51.5 135L56.5 129.8H62V135"/><path d="M86 131.3L91.5 131.8" stroke-width="2.4"/><path d="M94.5 134.5L97.5 132.4"/><path d="M126.6 128.4V135" stroke-width="2.4"/></g></svg>

</body></html>
